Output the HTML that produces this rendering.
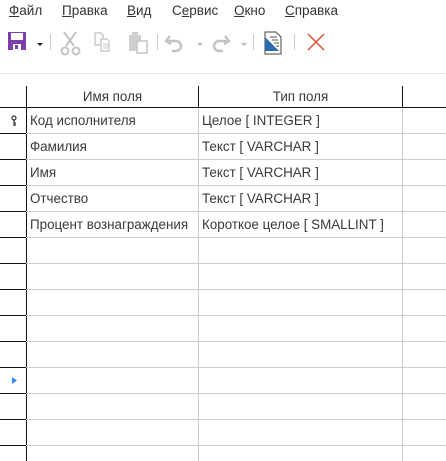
<!DOCTYPE html>
<html><head><meta charset="utf-8"><style>
*{margin:0;padding:0;box-sizing:border-box}
body{width:446px;height:461px;background:#fff;position:relative;overflow:hidden;font-family:"Liberation Sans","DejaVu Sans",sans-serif;font-size:13px;color:#3a3a3a}
.a{position:absolute}
.m{position:absolute;top:3px;font-size:13.5px;color:#333}
.m u{text-decoration:underline}
.h{position:absolute;height:1px;left:26px;width:420px;background:#cdcdcd}
.hb{position:absolute;height:1px;left:0;width:26px;background:#111}
.t{position:absolute;font-size:13.4px;color:#3a3a3a;white-space:nowrap}
</style></head><body>
<div class="m" style="left:9px"><u>Ф</u>айл</div>
<div class="m" style="left:62px"><u>П</u>равка</div>
<div class="m" style="left:127px"><u>В</u>ид</div>
<div class="m" style="left:172px">С<u>е</u>рвис</div>
<div class="m" style="left:234px"><u>О</u>кно</div>
<div class="m" style="left:285px"><u>С</u>правка</div>

<svg class="a" style="left:0;top:25px" width="340" height="35" viewBox="0 0 340 35">
 <rect x="8" y="7" width="18" height="18" fill="#7b3fa9"/>
 <rect x="11" y="8" width="12" height="7" fill="#fff"/>
 <rect x="13" y="19" width="8" height="6" fill="#fff"/>
 <rect x="15" y="20" width="3" height="4" fill="#7b3fa9"/>
 <path d="M37 18h6l-3 3z" fill="#222"/>
 <rect x="50" y="9" width="1" height="16" fill="#ccc"/>
 <g stroke="#c4c4c4" stroke-width="2" fill="none"><path d="M64 7l10 14M76 7l-10 14"/><circle cx="65" cy="26" r="3.5"/><circle cx="76" cy="26" r="3.5"/></g>
 <g fill="#fff" stroke="#ccc" stroke-width="1.5"><path d="M95 8h6l2 2v10h-8z"/><path d="M101 14h6l2 2v10h-8z"/></g>
 <g stroke="#ccc"><path d="M103 19h5M103 21h5M103 23h5"/></g>
 <g fill="#cfcfcf"><rect x="129" y="10" width="12" height="16"/><rect x="132" y="7" width="6" height="4"/></g>
 <rect x="137" y="16" width="10" height="12" fill="#fff" stroke="#c4c4c4" stroke-width="1.5"/>
 <rect x="157" y="9" width="1" height="16" fill="#ccc"/>
 <path d="M170 11l-4 5 5 3M167 16h9a5 5 0 010 10h-4" stroke="#c4c4c4" stroke-width="2.5" fill="none"/>
 <path d="M197 18h6l-3 3z" fill="#bbb"/>
 <path d="M225 11l4 5-5 3M228 16h-9a5 5 0 000 10h4" stroke="#c4c4c4" stroke-width="2.5" fill="none"/>
 <path d="M241 18h6l-3 3z" fill="#bbb"/>
 <rect x="253" y="9" width="1" height="16" fill="#ccc"/>
 <path d="M265 7h11l5 5v17h-16z" fill="#fff" stroke="#444"/>
 <path d="M265 12l14 14h-14z" fill="#2b6cb0"/>
 <g stroke="#555"><path d="M270 12h7M272 15h6M274 18h5M276 21h3"/></g>
 <rect x="294" y="9" width="1" height="16" fill="#ccc"/>
 <path d="M308 9l16 16M324 9l-16 16" stroke="#e04a3a" stroke-width="1.5"/>
</svg>
<div class="a" style="left:0;top:73px;width:446px;height:1px;background:#e2e2e2"></div>

<div class="a" style="left:26px;top:86px;width:1px;height:375px;background:#111"></div>
<div class="a" style="left:198px;top:86px;width:1px;height:21px;background:#111"></div>
<div class="a" style="left:198px;top:107px;width:1px;height:354px;background:#cdcdcd"></div>
<div class="a" style="left:402px;top:86px;width:1px;height:21px;background:#111"></div>
<div class="a" style="left:402px;top:107px;width:1px;height:354px;background:#cdcdcd"></div>
<div class="a" style="left:0;top:107px;width:446px;height:1px;background:#111"></div>
<div class="t" style="left:27px;width:171px;top:89px;text-align:center">Имя поля</div>
<div class="t" style="left:199px;width:203px;top:89px;text-align:center">Тип поля</div>

<div class="h" style="top:133px"></div><div class="hb" style="top:133px"></div>
<div class="h" style="top:159px"></div><div class="hb" style="top:159px"></div>
<div class="h" style="top:185px"></div><div class="hb" style="top:185px"></div>
<div class="h" style="top:211px"></div><div class="hb" style="top:211px"></div>
<div class="h" style="top:237px"></div><div class="hb" style="top:237px"></div>
<div class="h" style="top:263px"></div><div class="hb" style="top:263px"></div>
<div class="h" style="top:289px"></div><div class="hb" style="top:289px"></div>
<div class="h" style="top:315px"></div><div class="hb" style="top:315px"></div>
<div class="h" style="top:341px"></div><div class="hb" style="top:341px"></div>
<div class="h" style="top:367px"></div><div class="hb" style="top:367px"></div>
<div class="h" style="top:393px"></div><div class="hb" style="top:393px"></div>
<div class="h" style="top:419px"></div><div class="hb" style="top:419px"></div>
<div class="h" style="top:445px"></div><div class="hb" style="top:445px"></div>

<svg class="a" style="left:10px;top:115px" width="8" height="12"><circle cx="4" cy="3" r="2" fill="none" stroke="#333" stroke-width="1.2"/><path d="M4 5v6M4 8h2M4 10h2" stroke="#333" stroke-width="1.2"/></svg>
<svg class="a" style="left:11px;top:376px" width="7" height="9"><path d="M1 1l5 3.5-5 3.5z" fill="#2b8cf0"/></svg>

<div class="t" style="left:30px;top:113px">Код исполнителя</div>
<div class="t" style="left:202px;top:113px">Целое [ INTEGER ]</div>
<div class="t" style="left:30px;top:139px">Фамилия</div>
<div class="t" style="left:202px;top:139px">Текст [ VARCHAR ]</div>
<div class="t" style="left:30px;top:165px">Имя</div>
<div class="t" style="left:202px;top:165px">Текст [ VARCHAR ]</div>
<div class="t" style="left:30px;top:191px">Отчество</div>
<div class="t" style="left:202px;top:191px">Текст [ VARCHAR ]</div>
<div class="t" style="left:30px;top:217px">Процент вознаграждения</div>
<div class="t" style="left:202px;top:217px">Короткое целое [ SMALLINT ]</div>
</body></html>
